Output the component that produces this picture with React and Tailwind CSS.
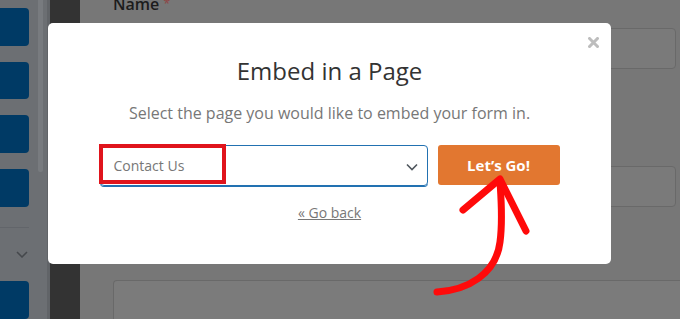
import React from "react";

export default function App() {
  return (
    <div className="relative w-[680px] h-[319px] overflow-hidden flex font-['Open_Sans',sans-serif]">
      {/* Sidebar */}
      <div className="w-[50px] h-full bg-[#6c6f73] flex shrink-0">
        <div className="w-[29px] flex flex-col pt-[8px]">
          <div className="h-[44px] bg-[#003a65] rounded-r-[4px]" />
          <div className="h-[44px] bg-[#003a65] rounded-r-[4px] mt-[16px]" />
          <div className="h-[44px] bg-[#003a65] rounded-r-[4px] mt-[16px]" />
          <div className="h-[44px] bg-[#003a65] rounded-r-[4px] mt-[16px]" />
          <div className="h-px bg-[#62656a] mt-[20px]" />
          <div className="flex justify-end pr-[1px] mt-[24px] h-[8px]">
            <svg width="12" height="7" viewBox="0 0 12 7">
              <path d="M1 1 L6 6 L11 1" fill="none" stroke="#45484c" strokeWidth="1.5" />
            </svg>
          </div>
          <div className="h-[44px] bg-[#003a65] rounded-r-[4px] mt-[23px]" />
        </div>
        <div className="ml-[9px] w-[5px] h-[172px] bg-[#787b7f] rounded-b-[2px]" />
        <div className="flex-1" />
        <div className="w-[3px] h-full bg-[#616468]" />
      </div>
      {/* Dark strip */}
      <div className="w-[30px] h-full bg-[#333333] shrink-0" />
      {/* Main */}
      <div className="flex-1 h-full bg-[#777777] flex flex-col pl-[33px] pr-[4px]">
        <div className="-mt-[4px] leading-4 text-[16px] font-semibold text-[#1c1c1c]">
          Name <span className="text-[#8c4a4a] text-[12px] align-top">*</span>
        </div>
        <div className="mt-[16px] h-[41px] rounded-[4px] border border-[#696969] bg-[#7a7a7a]" />
        <div className="mt-[97px] h-[41px] rounded-[4px] border border-[#696969] bg-[#7a7a7a]" />
        <div className="mt-[36px] leading-5 text-[16px] font-semibold text-[#1c1c1c]">Comment or Message</div>
        <div className="mt-[17px] flex-1 rounded-tl-[4px] border-l border-t border-[#696969] bg-[#7b7b7b] -mr-[4px]" />
      </div>

      {/* Modal */}
      <div className="absolute left-[48px] top-[23px] w-[563px] h-[241px] bg-white rounded-[5px] flex flex-col items-center">
        <svg className="absolute right-[12px] top-[14px]" width="11" height="11" viewBox="0 0 11 11">
          <path d="M1.5 1.5 L9.5 9.5 M9.5 1.5 L1.5 9.5" stroke="#bdbdbd" strokeWidth="3" strokeLinecap="square" />
        </svg>
        <div className="pt-[32px] leading-8 text-[24px] text-[#333333] font-medium">Embed in a Page</div>
        <div className="mt-[14px] leading-6 text-[16px] text-[#777777]">
          Select the page you would like to embed your form in.
        </div>
        <div className="mt-[20px] flex items-start gap-[10px]">
          <div className="relative w-[328px] h-[41px] rounded-[4px] border border-[#2271b1] shadow-[0_1px_0_0_#2271b1] flex items-center pl-[13px]">
            <span className="text-[14px] text-[#777777]">Contact Us</span>
            <svg className="absolute right-[9px] top-[17px]" width="12" height="8" viewBox="0 0 12 8">
              <path d="M1 1.5 L6 6.5 L11 1.5" fill="none" stroke="#50575e" strokeWidth="1.6" />
            </svg>
            <div className="absolute -left-[2px] -top-[2px] w-[127px] h-[40px] border-[4px] border-[#e0141c]" />
          </div>
          <button className="w-[122px] h-[40px] rounded-[3px] bg-[#e27730] text-white font-bold text-[15px] flex items-center justify-center">
            Let’s Go!
          </button>
        </div>
        <a className="mt-[17px] leading-5 text-[14px] text-[#777777] underline">« Go back</a>
      </div>

      {/* Red arrow */}
      <svg className="absolute left-0 top-0 pointer-events-none" width="680" height="319" viewBox="0 0 680 319">
        <path
          d="M437 292 C 468 290, 496 274, 500 242 C 503 220, 501 198, 500 182"
          fill="none"
          stroke="#ff0a0a"
          strokeWidth="7"
          strokeLinecap="round"
        />
        <path
          d="M463 210 L 500 179 L 526 231"
          fill="none"
          stroke="#ff0a0a"
          strokeWidth="7"
          strokeLinecap="round"
          strokeLinejoin="round"
        />
      </svg>
    </div>
  );
}
